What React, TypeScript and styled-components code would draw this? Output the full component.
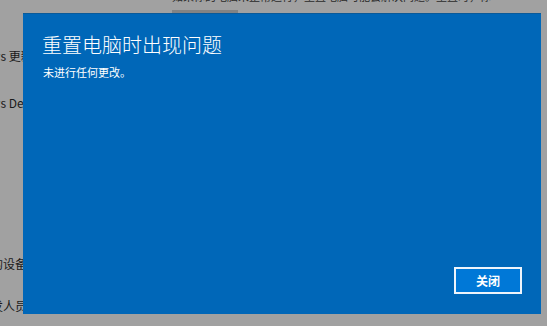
import React from "react";
import styled, { createGlobalStyle } from "styled-components";

const Global = createGlobalStyle`
  html, body { margin: 0; padding: 0; }
  body {
    width: 547px;
    height: 326px;
    overflow: hidden;
    background: #a1a1a1;
    font-family: "Noto Sans CJK SC", "Noto Sans", sans-serif;
  }
`;

const Page = styled.div`
  position: relative;
  width: 547px;
  height: 326px;
  overflow: hidden;
  background: #a1a1a1;
  display: grid;
  grid-template-columns: 172px 1fr;
`;

const Nav = styled.nav`
  display: flex;
  flex-direction: column;
  margin-left: -45px;
  white-space: nowrap;
`;

const NavItem = styled.div<{ $gap: number }>`
  margin-top: ${(p) => p.$gap}px;
  font-size: 12px;
  line-height: 16px;
  color: #1a1a1a;
`;

const Main = styled.div`
  display: flex;
  flex-direction: column;
`;

const Desc = styled.p`
  margin: -12px 0 0 0;
  font-size: 11px;
  line-height: 16px;
  color: #2a2a2a;
  white-space: nowrap;
  overflow: hidden;
  width: 320px;
`;

const ProgressTrack = styled.div`
  margin-top: 6px;
  width: 66px;
  height: 3px;
  background: #838383;
`;

const Dialog = styled.section`
  position: absolute;
  left: 23px;
  top: 13px;
  width: 518px;
  height: 301px;
  box-sizing: border-box;
  background: #0067b8;
  border-top: 1px solid #0a5a99;
  padding: 17px 19px 20px 19px;
  display: flex;
  flex-direction: column;
  color: #ffffff;
`;

const Title = styled.h1`
  margin: 0;
  font-size: 20px;
  line-height: 28px;
  font-weight: 300;
`;

const Message = styled.p`
  margin: 5px 0 0 1px;
  font-size: 11px;
  line-height: 16px;
  font-weight: 400;
`;

const Footer = styled.div`
  margin-top: auto;
  display: flex;
  justify-content: flex-end;
`;

const Button = styled.button`
  width: 68px;
  height: 27px;
  box-sizing: border-box;
  border: 2px solid #eef4fb;
  background: #0078d7;
  color: #ffffff;
  font-family: "Noto Sans CJK SC", sans-serif;
  font-size: 12px;
  font-weight: 700;
  padding: 0;
  cursor: pointer;
`;

export default function App() {
  return (
    <>
      <Global />
      <Page>
        <Nav>
          <NavItem $gap={48}>Windows 更新</NavItem>
          <NavItem $gap={31}>Windows Defender</NavItem>
          <NavItem $gap={145}>查找我的设备</NavItem>
          <NavItem $gap={26}>针对开发人员</NavItem>
        </Nav>
        <Main>
          <Desc>如果你的电脑未正常运行，重置电脑可能会解决问题。重置时，你可以选择保留个人文件或删除个人文件。</Desc>
          <ProgressTrack />
        </Main>
        <Dialog role="dialog">
          <Title>重置电脑时出现问题</Title>
          <Message>未进行任何更改。</Message>
          <Footer>
            <Button>关闭</Button>
          </Footer>
        </Dialog>
      </Page>
    </>
  );
}
